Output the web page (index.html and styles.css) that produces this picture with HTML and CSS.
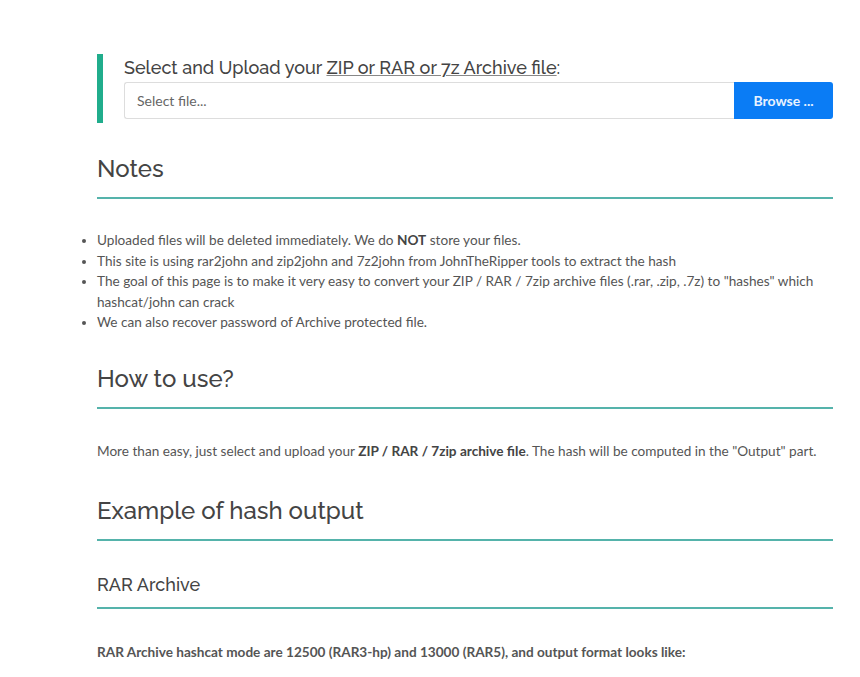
FILE: index.html
```html
<!DOCTYPE html>
<html lang="en">
<head>
  <meta charset="UTF-8">
  <title>Archive to hash</title>
  <link rel="stylesheet" href="styles.css">
</head>
<body>
  <div class="page">

    <!-- upload form -->
    <div class="upload">
      <label class="upload-label">Select and Upload your <u>ZIP or RAR or 7z Archive file</u>:</label>
      <div class="file-row">
        <div class="file-input">Select file...</div>
        <div class="browse-btn">Browse ...</div>
      </div>
    </div>

    <h2 class="section-title">Notes</h2>
    <ul class="notes">
      <li>Uploaded files will be deleted immediately. We do <b>NOT</b> store your files.</li>
      <li>This site is using rar2john and zip2john and 7z2john from JohnTheRipper tools to extract the hash</li>
      <li>The goal of this page is to make it very easy to convert your ZIP / RAR / 7zip archive files (.rar, .zip, .7z) to "hashes" which hashcat/john can crack</li>
      <li>We can also recover password of Archive protected file.</li>
    </ul>

    <h2 class="section-title">How to use?</h2>
    <p class="text">More than easy, just select and upload your <b>ZIP / RAR / 7zip archive file</b>. The hash will be computed in the "Output" part.</p>

    <h2 class="section-title big">Example of hash output</h2>
    <h3 class="sub-title">RAR Archive</h3>
    <p class="text strong">RAR Archive hashcat mode are 12500 (RAR3-hp) and 13000 (RAR5), and output format looks like:</p>

  </div>
</body>
</html>
```

FILE: styles.css
```css
body {
  margin: 0;
  background: #fff;
  font-family: Lato, "Open Sans", sans-serif;
  color: #555;
}
.page {
  width: 736px;
  margin-left: 97px;
  padding-top: 53px;
}
.upload {
  border-left: 6px solid #20ad8c;
  padding-left: 21px;
  height: 69px;
}
.upload-label {
  display: block;
  font-family: Raleway, "Noto Sans", sans-serif;
  font-size: 18px;
  font-weight: 500;
  color: #444;
  line-height: 28px;
  margin-top: 1px;
}
.upload-label u {
  text-decoration-color: #888;
}
.file-row {
  display: flex;
  height: 37px;
}
.file-input {
  flex: 1;
  border: 1px solid #ddd;
  border-right: none;
  border-radius: 3px 0 0 3px;
  padding: 0 12px;
  font-size: 14px;
  line-height: 35px;
  color: #666;
}
.browse-btn {
  width: 99px;
  background: #0a7cf5;
  color: #e8f2ff;
  border-radius: 0 3px 3px 0;
  font-size: 14px;
  font-weight: bold;
  text-align: center;
  line-height: 37px;
}
.section-title {
  font-family: Raleway, "Noto Sans", sans-serif;
  font-weight: 500;
  font-size: 24px;
  color: #444;
  margin: 31px 0 0;
  padding-bottom: 13px;
  border-bottom: 2px solid #55b3ab;
  line-height: 30px;
}
.section-title.big {
  margin-top: 35px;
}
.sub-title {
  font-family: Raleway, "Noto Sans", sans-serif;
  font-weight: 500;
  font-size: 18px;
  color: #444;
  margin: 32px 0 0;
  padding-bottom: 10px;
  border-bottom: 2px solid #55b3ab;
  line-height: 24px;
}
.notes {
  margin: 31px 0 0 0;
  padding-left: 0;
  list-style-position: outside;
  font-size: 13.6px;
  line-height: 20.5px;
}
.text {
  font-size: 13.6px;
  line-height: 20px;
  margin: 32px 0 0;
}
.text b, .notes b {
  color: #444;
}
.text.strong {
  font-weight: bold;
  color: #555;
  margin-top: 33px;
}
```
